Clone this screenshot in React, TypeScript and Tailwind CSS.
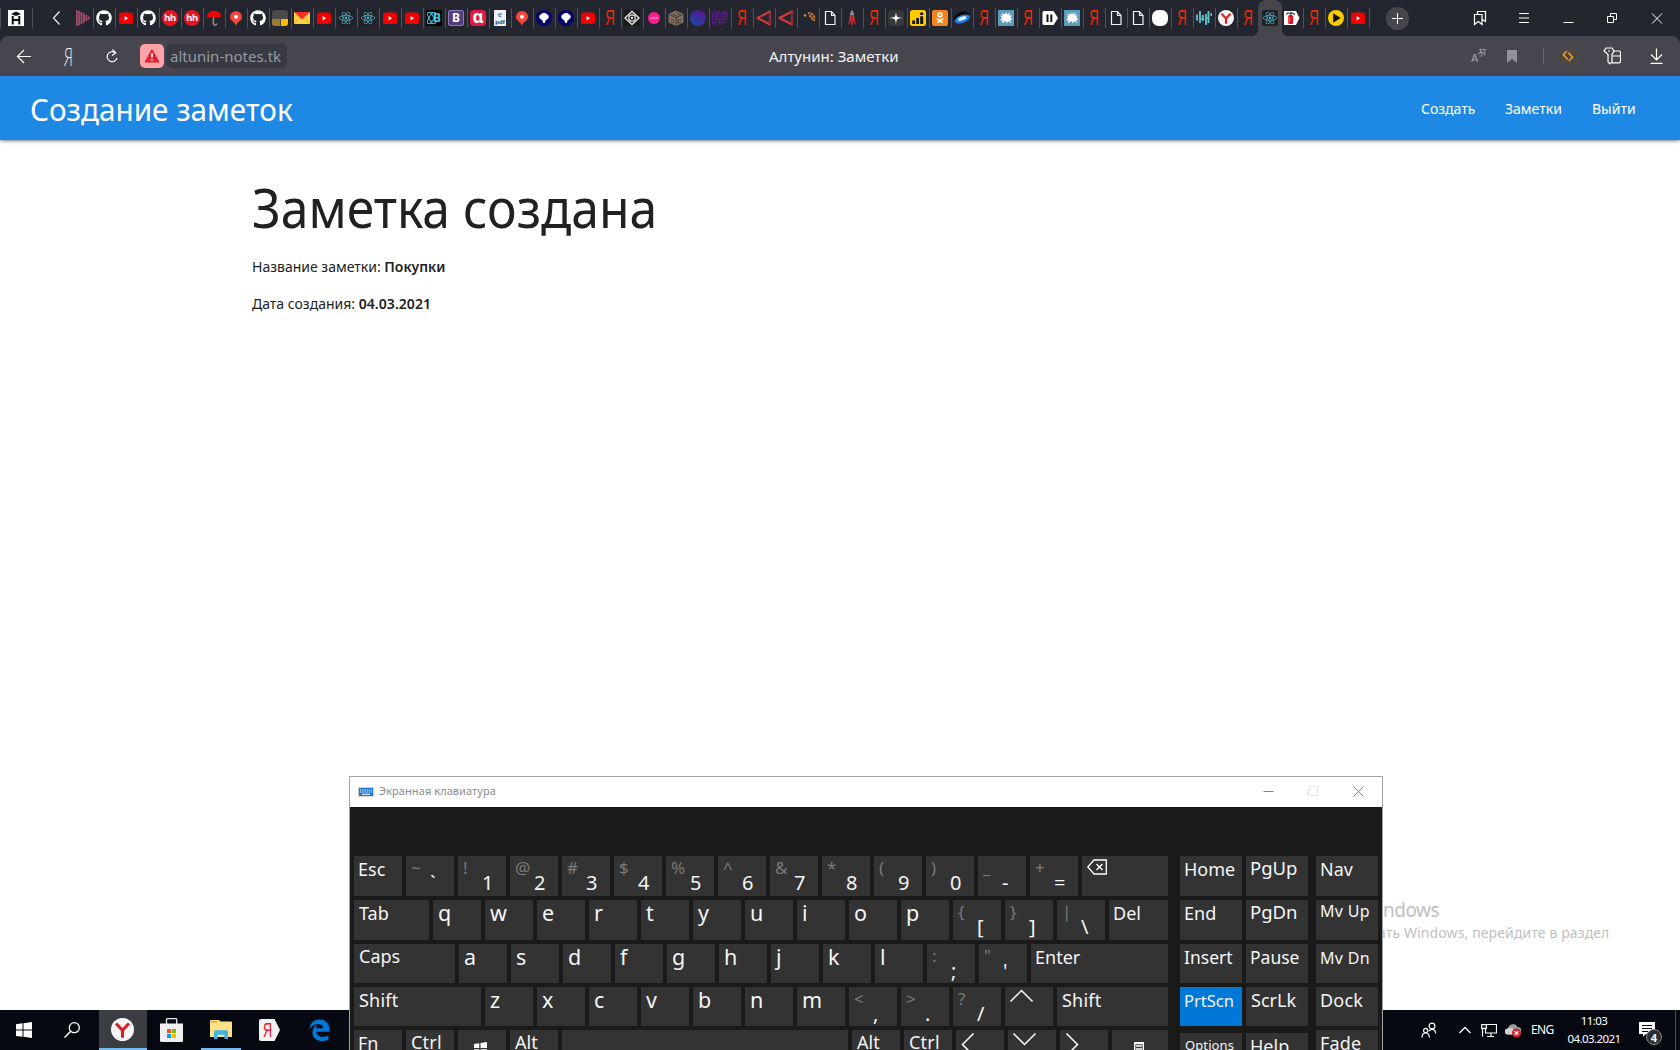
import React from "react";
import { FaGithub, FaReact } from "react-icons/fa";

type SvgProps = { children: React.ReactNode; size?: string; box?: string };

const Svg = ({ children, size = "w-4 h-4", box = "0 0 16 16" }: SvgProps) => (
  <svg viewBox={box} className={`${size} block shrink-0`} fill="none">
    {children}
  </svg>
);

const Badge = ({ className, children }: { className: string; children: React.ReactNode }) => (
  <span className={`flex h-4 w-4 items-center justify-center leading-none ${className}`}>{children}</span>
);

/* ---------- favicons ---------- */

const YouTube = () => (
  <Svg>
    <rect x="1" y="2.5" width="14" height="11.5" rx="2.6" fill="#f00000" />
    <path d="M6.6 6 10 8.2 6.6 10.4Z" fill="#fff" />
  </Svg>
);
const GitHub = () => <FaGithub className="h-4 w-4 text-white" />;
const HeadHunter = () => (
  <Badge className="rounded-full bg-[#e9141f] pb-px text-[9.5px] font-bold tracking-[-0.5px] text-white">hh</Badge>
);
const Umbrella = () => (
  <Svg>
    <path d="M1 7.5C1 3 4 .8 8 .8s7 2.2 7 6.7Z" fill="#f00505" />
    <path d="M7.400 7.500V13.500c0 2.300 3.300 2.300 3.300 0" stroke="#8e9092" strokeWidth="1.500" />
  </Svg>
);
const Pin = () => (
  <Svg>
    <path d="M8 1a6 6 0 0 0-6 6c0 4 5 4.500 6 9 1-4.500 6-5 6-9a6 6 0 0 0-6-6Z" fill="#f8453c" />
    <circle cx="8" cy="6.800" r="2" fill="#fff" />
  </Svg>
);
const YellowCorner = () => (
  <Svg>
    <rect width="16" height="16" rx="3" fill="#4a4a46" />
    <path d="M0 9h8v7H3a3 3 0 0 1-3-3Z" fill="#9c7e32" />
    <path d="M9 9h7v4a3 3 0 0 1-3 3H9Z" fill="#ffba00" />
  </Svg>
);
const Mail = () => (
  <Svg>
    <rect y="2" width="16" height="12" fill="#ffd13e" />
    <path d="M0 2h16L8 9.500Z" fill="#f4302b" />
    <path d="M0 14l5.500-6M16 14l-5.500-6" stroke="#eab02a" strokeWidth=".8" />
  </Svg>
);
const ReactTab = () => (
  <Badge className="rounded-[2px] bg-[#202124]">
    <FaReact className="h-[14px] w-[14px] text-[#55b5cf]" />
  </Badge>
);
const ReactBootstrap = () => (
  <Badge className="relative bg-black text-[12px] font-bold text-[#41cde8]">
    <Svg>
      <ellipse cx="5.500" cy="8" rx="2.300" ry="6.500" stroke="#41cde8" transform="rotate(-30 5.500 8)" />
      <ellipse cx="5.500" cy="8" rx="2.300" ry="6.500" stroke="#41cde8" transform="rotate(30 5.500 8)" />
      <path d="M7 2.500H2M7 13.500H2" stroke="#41cde8" strokeWidth=".8" />
    </Svg>
    <span className="absolute left-[7px] top-[2px]">B</span>
  </Badge>
);
const Bootstrap = () => (
  <Badge className="rounded-[2px] border border-[#8e79b0] bg-[#563d7c] text-[12px] font-bold text-white">B</Badge>
);
const Alpha = () => (
  <Badge className="rounded-[4px] bg-[#e31b44] pb-[3px] text-[17px] font-bold text-white">α</Badge>
);
const Pdf = () => (
  <span className="flex h-4 w-3 flex-col items-center bg-[#f1f1f1] font-['Liberation_Sans']">
    <b className="text-[8px] leading-[9px] text-[#1583d8]">e</b>
    <span className="text-[6px] font-bold leading-[7px] text-[#333]">pdf</span>
  </span>
);
const NavyTree = () => (
  <Svg>
    <circle cx="8" cy="8" r="8" fill="#05006f" />
    <path d="M8 3a3 3 0 0 1 3.200 1.600A2.400 2.400 0 0 1 11.500 9L9.500 10.500 8.800 13H7.200L6.500 10.500 4.500 9a2.400 2.400 0 0 1 .3-4.400A3 3 0 0 1 8 3Z" fill="#fff" />
  </Svg>
);
const Ya = () => (
  <span className="flex h-4 w-4 items-center justify-center font-['Liberation_Sans'] text-[22px] leading-none text-[#f22506]">
    <span className="scale-x-[.6]">Я</span>
  </span>
);
const Eye = () => (
  <Svg>
    <rect width="16" height="16" fill="#1b1b1b" />
    <path d="M1 8 8 1.500 15 8 8 14.500Z" stroke="#e6e6e6" strokeWidth="1.400" />
    <circle cx="8" cy="8" r="3.200" stroke="#e6e6e6" strokeWidth="1.200" />
    <circle cx="8" cy="8" r="1.200" fill="#e6e6e6" />
  </Svg>
);
const Pink = () => (
  <Svg>
    <circle cx="8" cy="8" r="6" fill="#fb1e8c" />
    <path d="M4.500 8h7" stroke="#ffa7d3" strokeWidth="1.300" strokeDasharray="2 .6" />
  </Svg>
);
const Cube = () => (
  <Svg>
    <path d="M8 .5 15.500 4v8.500l-7.500 3.500L.5 12.500V4Z" fill="#85705f" />
    <path d="M1 4.200 8 7.500 15 4.200M8 7.500v8M3 9l3 1.400M3 11.500l3 1.400M10 9v4.500l3-1.500M10.500 10.500l3-1.500M5 4l4 2M8 2.500l4 2" stroke="#2b2a2d" strokeWidth=".8" />
  </Svg>
);
const GradientCircle = () => (
  <Svg>
    <defs>
      <linearGradient id="blend" x1="1" y1="0" x2="0" y2="1">
        <stop stopColor="#630f86" />
        <stop offset="1" stopColor="#144bb0" />
      </linearGradient>
    </defs>
    <circle cx="8" cy="8" r="8" fill="url(#blend)" />
  </Svg>
);
const PurpleMap = () => (
  <Svg>
    <path d="M.6 7V3L3 1v6M3 3h1.500M5 7V1.500L7 1v6M9 7V3.500L11 1v6M11 4h4.400M15.400 7V3L13 1v6M0 8h16M.6 15V9.500h6M3 15v-3h4M7.500 9v6M9 15V9.500h6M9 12h6M11.500 12v3" stroke="#6312a0" strokeWidth="1" />
  </Svg>
);
const RedTriangle = () => (
  <Svg>
    <path d="M1.500 8 14 1.500v13Z" stroke="#d23a3a" strokeWidth="2.200" strokeLinejoin="round" />
    <path d="M14 2v12.500" stroke="#8d2b30" strokeWidth="2" />
  </Svg>
);
const OrangeSwirl = () => (
  <Svg>
    <circle cx="7" cy="10" r="5.500" stroke="#14284b" strokeWidth="1.500" />
    <path d="M8 3.500c4-1 8 2 5.500 8M9 6c3 0 3.500 2 2.500 4" stroke="#d97018" strokeWidth="2" strokeDasharray="2.500 .7" />
    <circle cx="5" cy="5.500" r="1.200" fill="#ef8a21" />
  </Svg>
);
const Doc = () => (
  <Svg>
    <path d="M3.500 1.500h6l3.500 4v9H3.500ZM9.500 1.500v4H13" stroke="#f1f1f2" strokeWidth="1.200" />
  </Svg>
);
const Rocket = () => (
  <Svg>
    <path d="M8 0c2 2 2.300 5 2.300 11H5.700C5.700 5 6 2 8 0Z" fill="#8f8f94" />
    <path d="M6.300 5h3.400v6H6.300ZM5.700 8 4 15l2.500-2ZM10.300 8 12 15l-2.500-2Z" fill="#c61d22" />
    <path d="M8 11v4" stroke="#d43a30" strokeWidth="1.300" />
  </Svg>
);
const Star = () => (
  <Svg>
    <rect width="16" height="16" rx="4" fill="#37383a" />
    <path d="M8 1c.3 6 1 6.700 7 7-6 .3-6.700 1-7 7-.3-6-1-6.700-7-7 6-.3 6.700-1 7-7Z" fill="#fff" />
  </Svg>
);
const Bars = () => (
  <Svg>
    <rect width="16" height="16" rx="2.500" fill="#fc0" />
    <path d="M2.200 10.500h2.800V14H2.200ZM6.200 8h2.800v6H6.200ZM10.200 6.200h3V14h-3ZM10.200 2.500h3V5h-3Z" fill="#151515" />
  </Svg>
);
const Ok = () => (
  <Svg>
    <rect width="16" height="16" rx="2" fill="#f58220" />
    <circle cx="8" cy="4.800" r="1.900" stroke="#fff" strokeWidth="1.500" />
    <path d="M4.800 8.700c2 1.600 4.400 1.600 6.400 0M8 10 5.300 13M8 10l2.700 3" stroke="#fff" strokeWidth="1.600" />
  </Svg>
);
const BlueDisc = () => (
  <Svg>
    <ellipse cx="8" cy="7" rx="8" ry="5" fill="#05070d" transform="rotate(-20 8 8)" />
    <ellipse cx="8" cy="9" rx="8" ry="3.800" fill="#1f7fe6" transform="rotate(-20 8 8)" />
    <ellipse cx="8" cy="8.500" rx="4.500" ry="1.800" fill="#d8efff" transform="rotate(-20 8 8)" />
  </Svg>
);
const Splat = () => (
  <Svg>
    <rect width="16" height="16" fill="#5d9bbd" />
    <path d="m8 2 1 2.500L12 2.500l-1 3h3L12.500 7.500l2 2-2.500.5L13.500 13l-3.500-2-1 2.500L7.500 11 4 13.500l.8-3.200L2 10.500 4 8 2.500 5.500l2.500.3L3.500 3 7 4.500Z" fill="#fff" />
  </Svg>
);
const Pause = () => (
  <Svg>
    <path d="M2 1h9.500L16 8l-4.500 7H2Q.5 15 .5 13.500V2.500Q.5 1 2 1Z" fill="#fff" />
    <path d="M5.500 4.500v7.500M9.300 4.500v7.500" stroke="#111" strokeWidth="2" />
  </Svg>
);
const WhiteCircle = () => (
  <Svg>
    <rect width="16" height="16" rx="6.500" fill="#fff" />
  </Svg>
);
const Teal = () => (
  <Svg>
    <path d="M1 4.500v6M4 1v12M7 5v6M10 4v11M12.500 1v12M15.300 3v3" stroke="#5cc0c4" strokeWidth="1.900" />
    <path d="M4 9h3M10 8h3" stroke="#5cc0c4" strokeWidth="1.500" />
  </Svg>
);
const YBrowser = ({ size = "w-4 h-4" }: { size?: string }) => (
  <Svg size={size}>
    <circle cx="8" cy="8" r="8" fill="#f7f5f5" />
    <path d="M3.500 3.800 8 8.500l4.500-4.700M8 8v5.800" stroke="#e01c22" strokeWidth="2.100" />
  </Svg>
);
const Extinguisher = () => (
  <Svg>
    <path d="M0 1h12l3.500 7L12 15H0Z" fill="#fff" />
    <rect x="4.200" y="5" width="5" height="9" rx="1.500" fill="#d7191f" />
    <path d="M2 4.500c2-2.500 6-2.500 9 0M6.700 2v3" stroke="#3d3d3d" strokeWidth="1.200" />
    <path d="M5.700 7v5" stroke="#ff9795" strokeWidth=".7" />
  </Svg>
);
const Play = () => (
  <Svg>
    <circle cx="8" cy="8" r="8" fill="#fc0" />
    <path d="M5.200 3.200 12.800 8l-7.600 4.800Z" fill="#111" />
  </Svg>
);
const Sound = () => (
  <Svg>
    <path d="M.8 0v16M3.200 .7v14.600M5.600 2v12M8 3.500v9M10.400 5v6M12.800 6.500v3" stroke="#a04a68" strokeWidth="1.900" />
  </Svg>
);

const tabs: React.FC[] = [
  GitHub, YouTube, GitHub, HeadHunter, HeadHunter, Umbrella, Pin, GitHub, YellowCorner, Mail,
  YouTube, ReactTab, ReactTab, YouTube, YouTube, ReactBootstrap, Bootstrap, Alpha, Pdf, Pin,
  NavyTree, NavyTree, YouTube, Ya, Eye, Pink, Cube, GradientCircle, PurpleMap, Ya,
  RedTriangle, RedTriangle, OrangeSwirl, Doc, Rocket, Ya, Star, Bars, Ok, BlueDisc,
  Ya, Splat, Ya, Pause, Splat, Ya, Doc, Doc, WhiteCircle, Ya,
  Teal, YBrowser, Ya, ReactTab, Extinguisher, Ya, Play, YouTube,
];
const ACTIVE_TAB = 53;

const Sep = () => <span className="h-5 w-px bg-[#50525b]" />;

function TabStrip() {
  return (
    <div className="flex h-9 items-center bg-[#24262f]">
      <Sep />
      <div className="flex w-[31px] justify-center pr-px">
        <Svg>
          <rect width="16" height="16" fill="#fff" />
          <path d="M4.700 6v8.500M11.300 6v8.500M4.700 10h6.600" stroke="#111" strokeWidth="2" />
          <path d="M3 4 8 1.500 13 4 8 6Z" fill="#111" />
        </Svg>
      </div>
      <Sep />
      <div className="flex w-[42px] justify-center pl-[6px]">
        <Svg>
          <path d="M10.500 1.500 4.500 8l6 6.500" stroke="#f2f2f3" strokeWidth="1.200" />
        </Svg>
      </div>
      <div className="flex w-[18px] justify-start pl-px">
        <Sound />
      </div>
      {tabs.map((Icon, i) =>
        i === ACTIVE_TAB ? (
          <div key={i} className="relative flex h-9 w-[22px] items-center justify-center">
            <span className="absolute -left-px -right-px top-0 h-9 rounded-t-[8px] bg-[#47464f]" />
            <span className="absolute -left-[7px] bottom-0 h-[6px] w-[6px] bg-[radial-gradient(circle_at_0_0,transparent_6px,#47464f_6px)]" />
            <span className="absolute -right-[7px] bottom-0 h-[6px] w-[6px] bg-[radial-gradient(circle_at_100%_0,transparent_6px,#47464f_6px)]" />
            <span className="relative">
              <Icon />
            </span>
          </div>
        ) : (
          <div key={i} className="flex w-[22px] items-center">
            {i === ACTIVE_TAB + 1 ? <span className="w-px" /> : <Sep />}
            <span className="flex w-[21px] justify-center pr-px">
              <Icon />
            </span>
          </div>
        ),
      )}
      <Sep />
      <span className="ml-4 flex h-[23px] w-[23px] items-center justify-center rounded-full bg-[#46464f]">
        <Svg size="w-[11px] h-[11px]" box="0 0 11 11">
          <path d="M5.500 0v11M0 5.500h11" stroke="#fff" />
        </Svg>
      </span>
      <div className="ml-[63px] flex items-center gap-[28px] text-white">
        <Svg>
          <path d="M2.500 4.500h7.500v10l-3.700-3-3.800 3ZM5.500 4.500v-3H13.500v10l-3-2" stroke="#fff" strokeWidth="1.200" />
        </Svg>
        <Svg>
          <path d="M3 3.500h10M3 8h10M3 12.500h10" stroke="#fff" />
        </Svg>
        <Svg>
          <path d="M3.500 12.500h10" stroke="#fff" />
        </Svg>
        <Svg>
          <path d="M3.500 6.500h6v6h-6ZM6.500 6.500v-3h6v6h-3" stroke="#fff" />
        </Svg>
        <Svg>
          <path d="M4 3.500 14 13.500M14 3.500l-10 10" stroke="#fff" />
        </Svg>
      </div>
    </div>
  );
}

function Toolbar() {
  return (
    <div className="bg-[#24262f]">
      <div className="flex h-10 items-center rounded-t-[8px] bg-[#47464f]">
        <div className="ml-4 flex w-[48px]">
          <Svg>
            <path d="M15 8.500H1.500M8 2 1.500 8.500 8 15" stroke="#fff" strokeWidth="1.200" />
          </Svg>
        </div>
        <span className="flex w-[42px]">
          <span className="w-3 origin-left scale-x-[.52] font-['Lato'] text-[26px] font-light leading-none text-white">Я</span>
        </span>
        <div className="flex w-[34px]">
          <Svg size="w-3 h-4" box="0 0 12 16">
            <path d="M9.500 5A5 5 0 1 0 11 10M6.500 1.500 9.800 4.800 6 7.500" stroke="#fff" strokeWidth="1.200" />
          </Svg>
        </div>
        <span className="flex h-6 w-6 items-center justify-center rounded-[5px] bg-[#ffa3a9]">
          <Svg>
            <path d="M8 1.500 15 14H1Z" fill="#e1242e" stroke="#e1242e" strokeLinejoin="round" />
            <path d="M8 5v4.500M8 11v1.700" stroke="#fff" strokeWidth="1.600" />
          </Svg>
        </span>
        <span className="ml-0.5 flex h-6 w-[121px] items-center whitespace-nowrap rounded-[5px] bg-[#373943] pl-1 text-[15px] text-[#9799a1]">
          altunin-notes.tk
        </span>
        <span className="ml-[482px] w-[130px] whitespace-nowrap text-[15px] text-[#f3f3f4]">Алтунин: Заметки</span>
        <div className="ml-[572px] flex w-4 items-center">
          <span className="relative h-4 w-4 text-[#8f8f97]">
            <span className="absolute left-0 top-[4px] text-[11px] font-semibold leading-none">A</span>
            <Svg>
              <path d="M8 1.500h7.500M9.500 .5v5M7 6.500c2.500-4 5.500-3 6 0M13.800 1.500v6M8.500 8c3 1 3-2 2-3.500" stroke="#8f8f97" strokeWidth="1.100" />
            </Svg>
          </span>
        </div>
        <div className="ml-5 flex w-[10px]">
          <Svg size="w-[10px] h-[13px]" box="0 0 10 13">
            <path d="M0 0h10v13L5 9 0 13Z" fill="#92929a" />
          </Svg>
        </div>
        <span className="ml-[26px] h-4 w-px bg-[#686870]" />
        <span className="ml-[14px] flex h-5 w-5 items-center justify-center rounded-full bg-[#4a4947]">
          <Svg>
            <path d="M7 3.300 3.500 7 8 11.800M9 13.200 12.800 9.500 8.500 4.800" transform="translate(-.2 -.2)" stroke="#ff9b16" strokeWidth="1.500" />
          </Svg>
        </span>
        <div className="ml-[25px]">
          <Svg size="w-[18px] h-[18px]" box="0 0 18 18">
            <path d="M3 1h6l2 3-2 3.500V15l-2 2-2-2V7.500L1 4ZM5 4h2" stroke="#fff" strokeWidth="1.200" />
            <path d="M11 4h5q1.500 0 1.500 1.500v9q0 1.300-1.500 1.300H9M9.500 9h8" stroke="#fff" strokeWidth="1.200" />
          </Svg>
        </div>
        <div className="ml-[28px]">
          <Svg size="w-[14px] h-4" box="0 0 14 16">
            <path d="M7.500 .5V12M2 6.500 7.500 12l5.500-5.500M1.500 15.300h12" stroke="#fff" strokeWidth="1.200" />
          </Svg>
        </div>
      </div>
    </div>
  );
}

/* ---------- web page ---------- */

function NotesPage() {
  return (
    <div className="h-[934px] bg-white text-[#212121]">
      <header className="flex h-16 items-center whitespace-nowrap bg-[#1e88e5] pl-[30px] text-white shadow-[0_2px_2px_0_rgba(0,0,0,0.14),0_3px_1px_-2px_rgba(0,0,0,0.12),0_1px_5px_0_rgba(0,0,0,0.2)]">
        <h1 className="w-[1391px] origin-left scale-x-[.956] pt-px text-[31px] leading-[64px]">Создание заметок</h1>
        <nav className="flex pt-[2px] text-[14px] leading-[62px]">
          <a className="w-[84px]">Создать</a>
          <a className="w-[87px]">Заметки</a>
          <a>Выйти</a>
        </nav>
      </header>
      <main className="pl-[252px] pt-[35px]">
        <h2 className="origin-left scale-x-[.923] whitespace-nowrap text-[54px] font-normal leading-[64px]">Заметка создана</h2>
        <p className="mt-[17px] text-[14px] leading-[22px]">
          Название заметки: <b className="font-semibold">Покупки</b>
        </p>
        <p className="mt-[15px] text-[14px] leading-[22px]">
          Дата создания: <b className="font-semibold tracking-[0.05px]">04.03.2021</b>
        </p>
      </main>
    </div>
  );
}

/* ---------- on-screen keyboard ---------- */

type KeyProps = { w?: string; label?: string; size?: string; upper?: string; lower?: string; tone?: string; children?: React.ReactNode };

function Key({ w = "w-12", label, size, upper, lower, tone = "bg-[#333333]", children }: KeyProps) {
  const labelStyle = size ?? (label && label.length === 1 ? "pl-[5px] text-[21.5px] leading-[25px]" : "pl-1 text-[18px] leading-[26px]");
  return (
    <div className={`relative shrink-0 whitespace-nowrap ${w} ${tone}`}>
      {label && <span className={`block ${labelStyle}`}>{label}</span>}
      {upper && <span className="absolute left-[5px] top-0 text-[17px] leading-[23px] text-[#7a7a7a]">{upper}</span>}
      {lower && <span className="absolute left-[24px] top-[15px] text-[20px] leading-[23px]">{lower}</span>}
      {children}
    </div>
  );
}

const Row = ({ h, children }: { h: string; children: React.ReactNode }) => <div className={`flex gap-1 ${h}`}>{children}</div>;

const Arrow = ({ d }: { d: string }) => (
  <Svg size="w-12 h-6" box="0 0 48 24">
    <path d={d} stroke="#fff" strokeWidth="1.500" />
  </Svg>
);

const symbols = ["~`", "!1", "@2", "#3", "$4", "%5", "^6", "&7", "*8", "(9", ")0", "_-", "+="];
const letterKeys = (letters: string) => letters.split("").map((c) => <Key key={c} label={c} />);
const pairKeys = (pairs: string[]) => pairs.map((p) => <Key key={p} upper={p[0]} lower={p[1]} />);

const NAV = "w-[62px]";

function Keyboard() {
  return (
    <section className="absolute left-[349px] top-[776px] h-[300px] w-[1034px] border border-[#a3a3a3] bg-[#1a1a1a] text-[#f5f5f5]">
      <div className="flex h-[30px] items-center bg-white pb-px pl-2 text-[#8c8c8c]">
        <Svg size="w-4 h-[10px]" box="0 0 16 10">
          <rect width="16" height="10" fill="#d5d3d0" />
          <rect x="1" y="1" width="14" height="8" fill="#1d7ad6" />
          <path d="M2 3h12M2 5h12" stroke="#fff" strokeDasharray="1.200 1" />
          <path d="M4 7.300h8" stroke="#fff" />
        </Svg>
        <span className="ml-[5px] w-[880px] text-[11px] tracking-[0.07px]">Экранная клавиатура</span>
        <div className="flex gap-[34px] pl-[4px]">
          <Svg size="w-[11px] h-[11px]" box="0 0 11 11">
            <path d="M.5 5.500h10" stroke="#858585" />
          </Svg>
          <Svg size="w-[11px] h-[11px]" box="0 0 11 11">
            <path d="M.5.5h9v9h-9Z" stroke="#e6e6e6" />
          </Svg>
          <Svg size="w-[11px] h-[11px]" box="0 0 11 11">
            <path d="M.5.500l10 10M10.500.500l-10 10" stroke="#858585" />
          </Svg>
        </div>
      </div>
      <div className="ml-1 mt-[49px] flex">
        <div className="flex flex-col gap-1">
          <Row h="h-10">
            <Key label="Esc" />
            {pairKeys(symbols)}
            <Key w="w-[86px]">
              <span className="block pl-[5px] pt-[3px]">
                <Svg size="w-5 h-4" box="0 0 20 16">
                  <path d="M.8 8 7 1h12.300v14H7Z" stroke="#fff" strokeWidth="1.300" />
                  <path d="m9.500 5 6 6M15.500 5l-6 6" stroke="#fff" strokeWidth="1.400" />
                </Svg>
              </span>
            </Key>
          </Row>
          <Row h="h-10">
            <Key w="w-[75px]" label="Tab" size="pl-[5px] text-[18px] leading-[26px]" />
            {letterKeys("qwertyuiop")}
            {pairKeys(["{[", "}]", "|\\"])}
            <Key w="w-[59px]" label="Del" />
          </Row>
          <Row h="h-[39px]">
            <Key w="w-[101px]" label="Caps" size="pl-[5px] text-[18px] leading-[25px]" />
            {letterKeys("asdfghjkl")}
            {pairKeys([":;", "\"'"])}
            <Key w="w-[137px]" label="Enter" />
          </Row>
          <Row h="h-[39px]">
            <Key w="w-[127px]" label="Shift" size="pl-[5px] text-[18px] tracking-[0.2px] leading-[26px]" />
            {letterKeys("zxcvbnm")}
            {pairKeys(["<,", ">.", "?/"])}
            <Key><Arrow d="M5.500 14.500 16.500 3.500l11 11" /></Key>
            <Key w="w-[111px]" label="Shift" size="pl-[5px] text-[18px] tracking-[0.2px] leading-[26px]" />
          </Row>
          <Row h="h-10">
            <Key label="Fn" />
            <Key label="Ctrl" size="pl-[5px] text-[18px] tracking-[0.2px] leading-[25px]" />
            <Key>
              <span className="block pl-4 pt-[12px]">
                <Svg size="w-[13px] h-[13px]">
                  <path d="M0 2.500 6.500 1.500v6H0ZM8 1.200 16 0v7.500H8ZM0 9h6.500v6L0 14ZM8 9h8v7l-8-1Z" fill="#fff" />
                </Svg>
              </span>
            </Key>
            <Key label="Alt" size="pl-[5px] text-[18px] leading-[25px]" />
            <Key w="w-[286px]" />
            <Key label="Alt" size="pl-[5px] text-[18px] leading-[25px]" />
            <Key label="Ctrl" size="pl-[5px] text-[18px] tracking-[0.2px] leading-[25px]" />
            <Key><Arrow d="M17.500 3.500 6.500 14.500l11 11" /></Key>
            <Key><Arrow d="M5.500 3.500 16.500 14.500l11-11" /></Key>
            <Key><Arrow d="M6.500 3.500 17.500 14.500l-11 11" /></Key>
            <Key w="w-[56px]">
              <span className="block pl-[22px] pt-[12px]">
                <Svg size="w-[10px] h-3" box="0 0 10 12">
                  <path d="M.7.700h8.600v11H.7ZM2 4h6M2 7h6M.7 1.500h8.600" stroke="#fff" strokeWidth="1.400" />
                </Svg>
              </span>
            </Key>
          </Row>
        </div>
        <div className="ml-3 flex flex-col gap-1">
          <Row h="h-10">
            <Key w={NAV} label="Home" />
            <Key w={NAV} label="PgUp" size="pl-1 text-[18.5px] leading-[24px]" />
          </Row>
          <Row h="h-10">
            <Key w={NAV} label="End" />
            <Key w={NAV} label="PgDn" size="pl-1 text-[18.5px] leading-[24px]" />
          </Row>
          <Row h="h-[39px]">
            <Key w={NAV} label="Insert" size="pl-1 text-[17.5px] leading-[26px]" />
            <Key w={NAV} label="Pause" size="pl-1 text-[17.5px] leading-[26px]" />
          </Row>
          <Row h="h-[39px]">
            <Key w={NAV} tone="bg-[#0078d7]" label="PrtScn" size="pl-1 text-[16.5px] leading-[27px]" />
            <Key w={NAV} label="ScrLk" size="pl-[5px] text-[18px] leading-[26px]" />
          </Row>
          <Row h="h-10 mt-[3px]">
            <Key w={NAV} label="Options" size="pl-[5px] text-[13px] tracking-[0.1px] leading-[25px]" />
            <Key w={NAV} label="Help" size="pl-1 text-[18px] leading-[26px]" />
          </Row>
        </div>
        <div className="ml-2 flex flex-col gap-1">
          <Row h="h-10"><Key w={NAV} label="Nav" /></Row>
          <Row h="h-10"><Key w={NAV} label="Mv Up" size="pl-1 text-[16px] tracking-[0.3px] leading-[23px]" /></Row>
          <Row h="h-[39px]"><Key w={NAV} label="Mv Dn" size="pl-1 text-[16px] tracking-[0.3px] leading-[28px]" /></Row>
          <Row h="h-[39px]"><Key w={NAV} label="Dock" size="pl-1 text-[18px] tracking-[0.2px] leading-[26px]" /></Row>
          <Row h="h-10"><Key w={NAV} label="Fade" size="pl-1 text-[18px] tracking-[0.2px] leading-[26px]" /></Row>
        </div>
      </div>
    </section>
  );
}

/* ---------- desktop ---------- */

function Watermark() {
  return (
    <div className="absolute left-[1383px] top-[896px] w-[230px] overflow-hidden whitespace-nowrap text-[#c0c0c0]">
      <div className="text-[19px] leading-[28px] tracking-[-0.5px]">ndows</div>
      <div className="-ml-[5px] text-[14px] leading-[18px] tracking-[0.12px]">ать Windows, перейдите в раздел</div>
    </div>
  );
}

function Taskbar() {
  return (
    <div className="absolute bottom-0 left-0 flex h-10 w-full items-center bg-[#060911] text-white">
      <div className="flex w-[99px] items-center">
        <div className="ml-4">
          <Svg>
            <path d="M0 2.200 6.500 1.300v6.300H0ZM7.500 1.200 16 0v7.600H7.500ZM0 8.500h6.500v6.300L0 13.900ZM7.500 8.500H16V16l-8.500-1.200Z" fill="#fff" />
          </Svg>
        </div>
        <div className="ml-8">
          <Svg>
            <circle cx="10.300" cy="5.700" r="5" stroke="#fff" strokeWidth="1.300" />
            <path d="M6.700 9.300.5 15.500" stroke="#fff" strokeWidth="1.500" />
          </Svg>
        </div>
      </div>
      <div className="flex h-10 w-12 items-center justify-center border-b-2 border-[#76b9ed] bg-[#3a3d42] pr-px">
        <YBrowser size="w-[23px] h-[23px]" />
      </div>
      <div className="ml-[13px] flex w-[41px]">
        <Svg size="w-[23px] h-6" box="0 0 23 24">
          <path d="M6.500 6V1.500Q6.500.7 7.300.7h8.600q.8 0 .8.800V6" stroke="#e6e6e6" strokeWidth="1.300" />
          <path d="M0 5.500h23V22.500Q23 24 21.500 24h-20Q0 24 0 22.500Z" fill="#efefef" />
          <path d="M7 11h4v4H7Z" fill="#f25022" />
          <path d="M12 11h4v4h-4Z" fill="#7fba00" />
          <path d="M7 16h4v4H7Z" fill="#00a4ef" />
          <path d="M12 16h4v4h-4Z" fill="#ffb900" />
        </Svg>
      </div>
      <div className="flex h-10 w-10 items-center justify-center border-b-2 border-[#76b9ed] pr-px">
        <Svg size="w-[22px] h-[19px]" box="0 0 22 19">
          <path d="M0 1q0-1 1-1h8l1.500 1.500H21q1 0 1 1V17H0Z" fill="#ffdf87" />
          <path d="M1 1h6v1.500H1Z" fill="#e4a52a" />
          <path d="M4 19v-7q0-1.800 1.800-1.800h10.400Q18 10.200 18 12v7h-3.500v-4.200h-7V19Z" fill="#3fb3e8" />
        </Svg>
      </div>
      <div className="relative ml-[18px] flex w-[50px]">
        <Svg size="w-[21px] h-[22px]" box="0 0 21 22">
          <path d="M2 0h13.500L21 11l-5.500 11H2Q0 22 0 20V2Q0 0 2 0Z" fill="#f3f1f1" />
        </Svg>
        <span className="absolute left-[1px] top-0 scale-x-[.6] font-['Liberation_Sans'] text-[21px] leading-[22px] text-[#e6161c]">Я</span>
      </div>
      <Svg size="w-[21px] h-[22px]" box="0 0 21 22">
        <path d="M.5 10C1 4 5 .5 10.800.5 17 .5 20.500 5 20.500 10v2.800H7.300c.3 3.500 3.200 5 6.400 5 2.300 0 4-.5 5.700-1.500v4.200c-2 1-4 1.500-6.700 1.500-6 0-9.200-3.600-9.200-8.500 0-3.500 1.800-6.500 5-7.900-1 1.200-1.300 2.300-1.400 3.700h6.900c0-2.600-1.500-4-4.200-4C6 4.800 2.700 6.600.5 10Z" fill="#0078d7" />
      </Svg>
      <div className="ml-[1091px] flex w-[38px]">
        <Svg>
          <circle cx="11" cy="4" r="2.900" stroke="#fff" strokeWidth="1.200" />
          <circle cx="4.700" cy="8.500" r="2.200" stroke="#fff" strokeWidth="1.200" />
          <path d="M1 15.500c0-6 7-6 7.500 0M8 9c3-3 6.500-1.500 6.800 2.500" stroke="#fff" strokeWidth="1.200" />
        </Svg>
      </div>
      <Svg size="w-3 h-4" box="0 0 12 16">
        <path d="m.5 11 5.500-5.500L11.500 11" stroke="#fff" strokeWidth="1.300" />
      </Svg>
      <div className="ml-[10px]">
        <Svg>
          <path d="M4.500 2.500h11v8.500h-11ZM10 11v3M6 14.500h7M1.500 6v8.500" stroke="#fff" strokeWidth="1.200" />
          <path d="M.7 2.700h4.600v3.600H.7Z" fill="#060911" stroke="#fff" strokeWidth="1.200" />
        </Svg>
      </div>
      <div className="ml-2 w-[26px]">
        <Svg>
          <path d="M3 12.500A3 3 0 0 1 3 6.500 5 5 0 0 1 12.500 5 3.700 3.700 0 0 1 13 12.500Z" fill="#9c9c9c" />
          <path d="M1 12a3 3 0 0 1 2-5.500 4 4 0 0 1 6 2V12.500H2Z" fill="#d3d3d3" />
          <circle cx="11.500" cy="11" r="4.500" fill="#d6202c" />
          <path d="m9.700 9.200 3.600 3.600M13.300 9.200l-3.600 3.600" stroke="#fff" strokeWidth="1.300" />
        </Svg>
      </div>
      <span className="w-9 text-[12px] tracking-[-0.7px]">ENG</span>
      <div className="flex w-[54px] flex-col items-center whitespace-nowrap text-[11.500px] leading-[18px]">
        <span className="tracking-[-0.6px]">11:03</span>
        <span className="tracking-[-0.6px]">04.03.2021</span>
      </div>
      <div className="relative ml-[18px] h-[18px] w-4">
        <Svg>
          <path d="M0 2h16v12H7l-3 2.500V14H0Z" transform="translate(0 -1)" fill="#fff" />
          <path d="M3 4.500h10M3 7.500h10M3 10.500h6" stroke="#060911" />
        </Svg>
        <span className="absolute left-[7px] top-[8px] flex h-4 w-4 items-center justify-center rounded-full border border-[#8a8a8a] bg-[#2c2e33] text-[11px] font-bold leading-none">4</span>
      </div>
      <span className="ml-5 h-10 w-px bg-[#4d5056]" />
    </div>
  );
}

export default function App() {
  return (
    <div className="relative h-[1050px] w-[1680px] overflow-hidden bg-white font-['Noto_Sans',sans-serif]">
      <TabStrip />
      <Toolbar />
      <NotesPage />
      <Watermark />
      <Taskbar />
      <Keyboard />
    </div>
  );
}
